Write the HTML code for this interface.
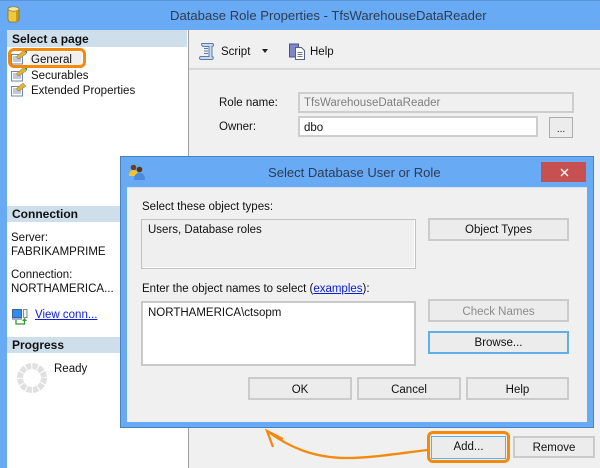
<!DOCTYPE html>
<html><head><meta charset="utf-8"><style>
html,body{margin:0;padding:0}
body{width:600px;height:468px;position:relative;overflow:hidden;background:#f0f0f0;font-family:"Liberation Sans",sans-serif;font-size:11.5px;color:#111}
div,svg{position:absolute;box-sizing:border-box}
.t{white-space:nowrap;line-height:14px}
.h{font-weight:bold;font-size:12px;color:#111;background:#cfdeeb;left:7px;width:180px;padding-left:5px}
.b{background:#ececec;border:2px solid #cbcbcb;text-align:center;color:#111;white-space:nowrap;height:23px}
</style></head><body>
<div style="left:0;top:0;width:600px;height:30px;background:#69aaf5;border-top:1px solid #5a93d8"></div>
<div style="left:0;top:30px;width:7px;height:438px;background:#69aaf5"></div>
<svg style="left:7px;top:6px" width="14" height="17" viewBox="0 0 14 17"><rect x="1" y="1" width="11" height="15" rx="3" fill="#f0c83c" stroke="#7d7440" stroke-width=".8"/><ellipse cx="6.5" cy="3" rx="5.5" ry="2.2" fill="#f7e79b" stroke="#7d7440" stroke-width=".6"/><rect x="9" y="5" width="2.5" height="10" fill="#c79a18"/></svg>
<div class="t" style="left:170px;top:9px;font-size:13.1px;color:#2c3c52">Database Role Properties - TfsWarehouseDataReader</div>
<div style="left:7px;top:30px;width:182px;height:438px;background:#fff;border-right:1px solid #a0a0a0"></div>
<div style="left:189px;top:68px;width:411px;height:2px;background:#d9d9d9"></div>

<div class="h t" style="top:30px;height:17px;line-height:18px">Select a page</div>
<div style="left:30px;top:52px;width:52px;height:13px;background:#f0f0f0"></div>
<div style="left:8px;top:48px;width:78px;height:20px;border:3px solid #f48a0c;border-radius:6px"></div>
<svg style="left:11px;top:50px" width="17" height="15" viewBox="0 0 17 15"><rect x=".5" y="4.5" width="11" height="9.5" fill="#fff" stroke="#6f86a8"/><path d="M2 7h8M2 9h8M2 11h8" stroke="#7c93bd"/><path d="M5 7l7-6 3 3-7 5z" fill="#e0b23c" stroke="#8a7428" stroke-width=".5"/><path d="M13 1l3 0 0 3z" fill="#3f8f3a"/></svg>
<div class="t" style="left:31px;top:53px">General</div>
<svg style="left:11px;top:67px" width="17" height="15" viewBox="0 0 17 15"><rect x=".5" y="4.5" width="11" height="9.5" fill="#fff" stroke="#6f86a8"/><path d="M2 7h8M2 9h8M2 11h8" stroke="#7c93bd"/><path d="M5 7l7-6 3 3-7 5z" fill="#e0b23c" stroke="#8a7428" stroke-width=".5"/><path d="M13 1l3 0 0 3z" fill="#3f8f3a"/></svg>
<div class="t" style="left:31px;top:69px">Securables</div>
<svg style="left:11px;top:82px" width="17" height="15" viewBox="0 0 17 15"><rect x=".5" y="4.5" width="11" height="9.5" fill="#fff" stroke="#6f86a8"/><path d="M2 7h8M2 9h8M2 11h8" stroke="#7c93bd"/><path d="M5 7l7-6 3 3-7 5z" fill="#e0b23c" stroke="#8a7428" stroke-width=".5"/></svg>
<div class="t" style="left:31px;top:84px">Extended Properties</div>

<div class="h t" style="top:206px;height:16px;line-height:16px;width:113px">Connection</div>
<div class="t" style="left:11px;top:231px">Server:</div>
<div class="t" style="left:11px;top:245px">FABRIKAMPRIME</div>
<div class="t" style="left:11px;top:268px">Connection:</div>
<div class="t" style="left:11px;top:282px">NORTHAMERICA...</div>
<svg style="left:11px;top:308px" width="17" height="17" viewBox="0 0 17 17"><rect x="1.5" y="1.5" width="9" height="8" fill="#2f8cf0" stroke="#44618c"/><rect x="1" y="10" width="10" height="2" fill="#9fb2cd"/><rect x="12.5" y="1.5" width="3.5" height="8" fill="#f4f4f4" stroke="#7f8ca0"/><path d="M5 12v4h8.5v-4" fill="none" stroke="#2e9b2e" stroke-width="1.3"/><path d="M11 13l2.5-3 2.5 3z" fill="#2e9b2e"/></svg>
<div class="t" style="left:35px;top:308px;color:#0a1ee0;text-decoration:underline">View conn...</div>
<div class="h t" style="top:337px;height:16px;line-height:17px;width:113px">Progress</div>
<svg style="left:17px;top:363px" width="30" height="30" viewBox="0 0 30 30"><circle cx="15" cy="15" r="12" fill="none" stroke="#e0e0e0" stroke-width="6" stroke-dasharray="5.2 1.08"/></svg>
<div class="t" style="left:54px;top:362px">Ready</div>

<svg style="left:199px;top:43px" width="17" height="17" viewBox="0 0 17 17"><path d="M3 .5h10c2 0 2 3 0 3v10c1.500 0 2 3-.5 3H2c-2 0-2-3 0-3h8V3.500H4.500C2.500 3.500 2 .5 3 .5z" fill="#c9d9f0" stroke="#5a7aa8"/><path d="M5 5.500h4M5 8h4M5 10.500h4" stroke="#5a7aa8"/></svg>
<div class="t" style="left:221px;top:45px">Script</div>
<div style="left:262px;top:49px;width:0;height:0;border:3.5px solid transparent;border-top:4px solid #222;border-bottom:0"></div>
<svg style="left:289px;top:43px" width="17" height="17" viewBox="0 0 17 17"><rect x=".5" y="1" width="9" height="13" fill="#8186c8" stroke="#4a4f92"/><path d="M6.500 4.500h6l3 3v9h-9z" fill="#fff" stroke="#55617c"/><path d="M8.500 9.500h5M8.500 11.500h5M8.500 13.500h5" stroke="#6a7690"/></svg>
<div class="t" style="left:310px;top:45px">Help</div>

<div class="t" style="left:219px;top:96px">Role name:</div>
<div style="left:298px;top:92px;width:276px;height:21px;background:#f0f0f0;border:2px solid #cdcdcd"></div>
<div class="t" style="left:304px;top:96px;color:#7f7f7f">TfsWarehouseDataReader</div>
<div class="t" style="left:219px;top:120px">Owner:</div>
<div style="left:298px;top:116px;width:240px;height:21px;background:#fff;border:2px solid #cdcdcd"></div>
<div class="t" style="left:304px;top:121px">dbo</div>
<div class="b" style="left:549px;top:117px;width:24px;height:21px;background:#ececec;border:1px solid #adadad;line-height:24px;font-size:10px">...</div>

<!-- Dialog -->
<div style="left:120px;top:156px;width:474px;height:272px;background:#69aaf5;border:1px solid #4a7fc0"></div>
<div style="left:127px;top:187px;width:460px;height:235px;background:#f0f0f0;border-top:1px solid #d4e4f7"></div>
<svg style="left:129px;top:164px" width="17" height="16" viewBox="0 0 17 16"><circle cx="4.500" cy="3.500" r="2.800" fill="#6a4020"/><path d="M0 12c0-4 1.500-6 4.500-6S9 8 9 12z" fill="#f1c232"/><circle cx="10.500" cy="5.500" r="2.800" fill="#5a3518"/><path d="M5 16c0-5 2-7 5.500-7S16 11 16 16z" fill="#4d8ad9"/></svg>
<div class="t" style="left:268px;top:166px;font-size:13.05px;color:#2c3c52">Select Database User or Role</div>
<div style="left:541px;top:162px;width:45px;height:20px;background:#c75050"></div>
<svg style="left:560px;top:168px" width="9" height="9" viewBox="0 0 9 9"><path d="M1 1l7 7M8 1l-7 7" stroke="#fff" stroke-width="1.300"/></svg>

<div class="t" style="left:142px;top:200px">Select these object types:</div>
<div style="left:141px;top:219px;width:275px;height:50px;background:#efefef;border:1px solid #c2c2c2;box-shadow:inset -1px -1px 0 #fff"></div>
<div class="t" style="left:148px;top:223px">Users, Database roles</div>
<div class="b" style="left:428px;top:218px;width:141px;line-height:20px">Object Types</div>

<div class="t" style="left:142px;top:282px">Enter the object names to select (<span style="color:#0a1ee0;text-decoration:underline">examples</span>):</div>
<div style="left:141px;top:301px;width:275px;height:65px;background:#fff;border:2px solid #c8c8c8"></div>
<div class="t" style="left:148px;top:306px">NORTHAMERICA\ctsopm</div>
<div class="b" style="left:428px;top:299px;width:141px;line-height:22px;color:#8c8c8c">Check Names</div>
<div class="b" style="left:428px;top:331px;width:141px;line-height:20px;border-color:#5fb0e6">Browse...</div>

<div class="b" style="left:248px;top:377px;width:104px;line-height:22px">OK</div>
<div class="b" style="left:357px;top:377px;width:104px;line-height:22px">Cancel</div>
<div class="b" style="left:466px;top:377px;width:103px;line-height:22px">Help</div>

<div class="b" style="left:431px;top:436px;width:75px;line-height:21px;border-color:#5fb0e6;border-width:1.500px">Add...</div>
<div style="left:427px;top:431px;width:83px;height:32px;border:3px solid #f48a0c;border-radius:6px"></div>
<div class="b" style="left:513px;top:436px;width:82px;height:22px;line-height:20px">Remove</div>
<svg style="left:255px;top:420px" width="175" height="48" viewBox="0 0 175 48"><path d="M172 30C140 34 115 38 92 38 60 38 35 28 12 11" fill="none" stroke="#f48a0c" stroke-width="2.300"/><path d="M28 19L12 11 18 27" fill="none" stroke="#f48a0c" stroke-width="2.300"/></svg>
</body></html>
